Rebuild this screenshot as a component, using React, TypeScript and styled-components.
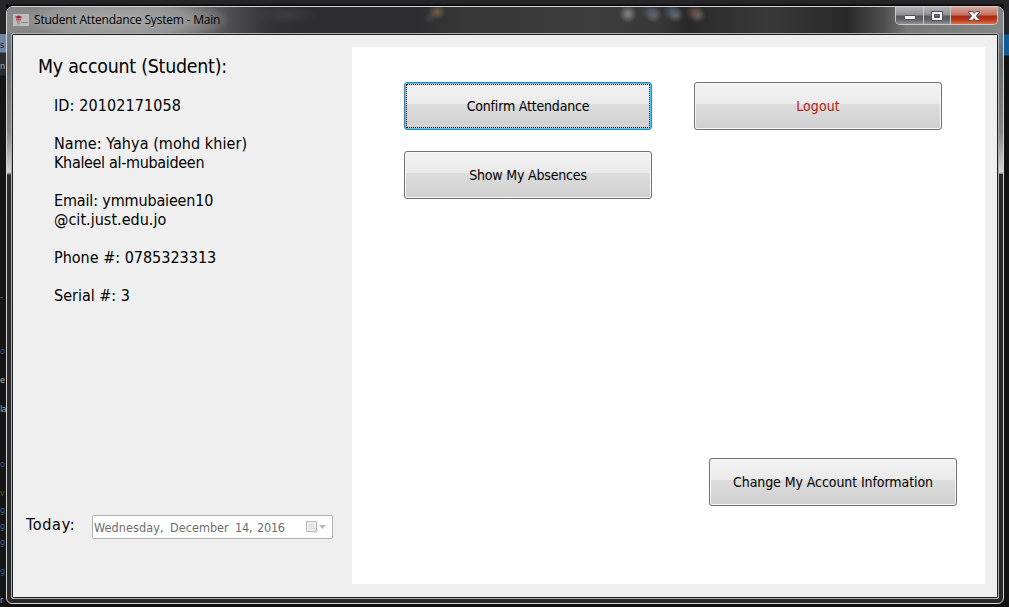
import React from "react";
import styled, { createGlobalStyle, css } from "styled-components";

const Global = createGlobalStyle`
  * { box-sizing: border-box; }
  body { margin: 0; background: #101011; overflow: hidden; }
`;

const tahoma = css`
  font-family: "DejaVu Sans Condensed", "DejaVu Sans", sans-serif;
  font-stretch: condensed;
`;

const Desktop = styled.div`
  display: grid;
  grid-template-columns: 6px 998px 5px;
  width: 1009px;
  height: 607px;
  overflow: hidden;
  background: linear-gradient(#262628 0, #242426 4px, #08080a 5px, #08080a 6px, #101011 7px);
`;

const Strip = styled.div`
  display: flex;
  flex-direction: column;
  align-items: flex-start;
  background: linear-gradient(#262628 0, #262628 34px, #6f86a6 34px, #6f86a6 52px, #2d2d30 53px, #2d2d30 75px, #151516 76px);
`;

const Fragment = styled.span<{ $gap: number; $color: string }>`
  ${tahoma}
  flex: none;
  height: 14px;
  margin-top: ${(p) => p.$gap}px;
  font-size: 9px;
  line-height: 14px;
  letter-spacing: -0.8px;
  color: ${(p) => p.$color};
`;

const RightStrip = styled.div`
  background: linear-gradient(#262628 0, #262628 34px, #0d5c95 35px, #0d5c95 55px, #121213 56px);
`;

const Frame = styled.div`
  display: flex;
  flex-direction: column;
  height: 598px;
  margin-top: 6px;
  border: 1px solid #d4d4d4;
  border-radius: 7px 7px 6px 6px;
  overflow: hidden;
  background:
    linear-gradient(90deg, transparent 990px, #282828 990px) 0 167px / 100% 100% no-repeat,
    linear-gradient(#77777a 0, #6c7f8c 30px, #66686a 55px, #777 85px, #858585 125px, #d4d4d4 165px, #777 167px, #2c2c2d 168px, #28292b 100%);
`;

const TitleBar = styled.header`
  display: flex;
  align-items: flex-start;
  height: 26px;
  padding-left: 6px;
  background:
    radial-gradient(ellipse 9px 8px at 430px 5px, #8b7650b0 0, transparent 100%),
    radial-gradient(ellipse 6px 6px at 423px 11px, #41525ca0 0, transparent 100%),
    radial-gradient(ellipse 9px 9px at 621px 7px, #8b8b8bd0 15%, transparent 100%),
    radial-gradient(ellipse 9px 9px at 643px 5px, #56677ca0 0, transparent 100%),
    radial-gradient(ellipse 8px 8px at 647px 8px, #858585a0 0, transparent 100%),
    radial-gradient(ellipse 9px 9px at 665px 5px, #566c8ca0 0, transparent 100%),
    radial-gradient(ellipse 8px 8px at 669px 8px, #858585a0 0, transparent 100%),
    radial-gradient(ellipse 9px 9px at 687px 5px, #80564ea0 0, transparent 100%),
    radial-gradient(ellipse 8px 8px at 691px 8px, #858585a0 0, transparent 100%),
    radial-gradient(ellipse 34px 9px at 280px 8px, #48484a90 0, transparent 100%),
    radial-gradient(ellipse 114px 24px at 110px 13px, #a4a4a4 20%, #9c9c9cd0 65%, #8c8c8c80 85%, transparent 100%),
    linear-gradient(90deg, #89898a 0, #747475 60px, #5e5e60 205px, #454547 235px, #323234 265px, #2d2d30 300px, #2d2d2f 410px, #383838 460px, #3c3c3c 590px, #383838 650px, #292929 680px, #383838 760px, #292929 840px, #4c4c4c 875px, #777 900px, #858687 100%);
`;

const AppIcon = styled.svg`
  width: 16px;
  height: 12px;
  margin-top: 7px;
`;

const Title = styled.h1`
  flex: 1;
  margin: 3px 0 0 5px;
  font: 400 12px/20px "Open Sans", "Noto Sans", sans-serif;
  letter-spacing: -0.2px;
  color: #000;
`;

const Captions = styled.div`
  display: flex;
  width: 103px;
  height: 18px;
  margin-right: 5px;
  border: 1px solid #c9c9c9;
  border-top: 0;
  border-radius: 0 0 5px 5px;
  overflow: hidden;
`;

const CaptionButton = styled.button<{ $close?: boolean; $drop?: number }>`
  display: flex;
  justify-content: center;
  align-items: center;
  width: ${(p) => (p.$close ? 47 : 27)}px;
  height: 17px;
  padding: ${(p) => p.$drop ?? 0}px 0 0;
  border: 0;
  & + & { border-left: 1px solid #c9c9c9; }
  background: ${(p) =>
    p.$close
      ? "linear-gradient(#d8a498 0, #c6705e 8px, #a82812 9px, #bc3a1d 13px, #e0714d 17px)"
      : "linear-gradient(#b2b3b5 0, #8e8f91 8px, #57585b 9px, #65666a 13px, #929396 17px)"};
`;

const Client = styled.main`
  display: flex;
  width: 988px;
  height: 566px;
  margin-left: 4px;
  border: 1px solid #aeb0b0;
  border-radius: 2px;
  background: #efefef;
  box-shadow: inset 0 0 0 1px #1c1e20;
  padding: 1px;
`;

const Sidebar = styled.aside`
  display: flex;
  flex-direction: column;
  width: 339px;
  padding: 20px 0 58px 13px;
  color: #000;
  ${tahoma}
`;

const Heading = styled.h2`
  margin: 0 0 0 12px;
  font-size: 19.4px;
  font-weight: 400;
  line-height: 24px;
  letter-spacing: -0.25px;
`;

const Details = styled.div`
  display: flex;
  flex-direction: column;
  gap: 19px;
  margin: 17px 0 0 28px;
`;

const Line = styled.div<{ $track?: number }>`
  font-size: 16px;
  line-height: 19px;
  white-space: nowrap;
  letter-spacing: ${(p) => p.$track ?? 0}px;
`;

const DateRow = styled.div`
  display: flex;
  align-items: flex-start;
  margin-top: auto;
`;

const Today = styled.label`
  width: 66px;
  font-size: 16px;
  line-height: 19px;
  letter-spacing: 0.7px;
`;

const DateField = styled.div`
  display: flex;
  align-items: center;
  width: 241px;
  height: 24px;
  padding: 0 5px 0 1px;
  border: 1px solid #afb0b0;
  border-radius: 2px;
  background: #fff;
  color: #6d6d6d;
  font-size: 12.5px;
`;

const DatePart = styled.span<{ $w: number; $track: number }>`
  width: ${(p) => p.$w}px;
  letter-spacing: ${(p) => p.$track}px;
  white-space: nowrap;
`;

const CalendarIcon = styled.svg`
  width: 22px;
  height: 14px;
  margin-left: auto;
`;

const Panel = styled.section`
  display: flex;
  flex-direction: column;
  width: 633px;
  height: 537px;
  margin-top: 12px;
  padding: 35px 28px 78px 52px;
  background: #fff;
`;

const Actions = styled.div`
  display: grid;
  grid-template-columns: 248px 248px;
  column-gap: 42px;
  row-gap: 21px;
`;

const ActionButton = styled.button<{ $focused?: boolean; $color?: string; $track?: number }>`
  display: block;
  width: 248px;
  height: 48px;
  padding: 0;
  border: 1px solid ${(p) => (p.$focused ? "#3c7fb1" : "#707070")};
  border-radius: 3px;
  background: linear-gradient(#f2f2f2 0, #ebebeb 21px, #dddddd 21px, #cfcfcf 100%);
  box-shadow: inset 0 0 0 1px ${(p) => (p.$focused ? "#46d0f8" : "#f8f8f8")};
  ${(p) => p.$focused && "outline: 1px dotted #000; outline-offset: -3px;"}
  color: ${(p) => p.$color || "#000"};
  ${tahoma}
  font-size: 14px;
  line-height: 18px;
  letter-spacing: ${(p) => p.$track ?? -0.18}px;
`;

const Footer = styled.div`
  display: flex;
  justify-content: flex-end;
  margin-top: auto;
`;

const fragments = [
  { text: "s", gap: 38, color: "#10151c" },
  { text: "n", gap: 7, color: "#aaa" },
  { text: "-", gap: 217, color: "#a56a26" },
  { text: "o", gap: 40, color: "#2d5a8c" },
  { text: "e", gap: 15, color: "#c0bda0" },
  { text: "la", gap: 15, color: "#94a895" },
  { text: "o", gap: 41, color: "#2d5a8c" },
  { text: "v", gap: 15, color: "#2f6b25" },
  { text: "g", gap: 3, color: "#2d5a8c" },
  { text: "g", gap: 2, color: "#2d5a8c" },
  { text: "g", gap: 2, color: "#2d5a8c" },
  { text: "g", gap: 15, color: "#2d5a8c" },
  { text: "r", gap: 15, color: "#a0a0a0" },
];

export default function App() {
  return (
    <>
      <Global />
      <Desktop>
        <Strip>
          {fragments.map((f, i) => (
            <Fragment key={i} $gap={f.gap} $color={f.color}>{f.text}</Fragment>
          ))}
        </Strip>
        <Frame>
          <TitleBar>
            <AppIcon viewBox="0 0 16 12">
              <rect width="16" height="12" fill="#bdbdbd" />
              <path d="M1.5 3 5.5 1.4 9.5 3 5.5 4.5Z" fill="#a3283c" />
              <path d="M3 4.5h5v2H3z" fill="#b34c5b" />
              <path d="M3.5 6.5h4l-1 3.8h-2z" fill="#999" />
              <path d="M8 8.5h7" stroke="#8c8c8c" />
            </AppIcon>
            <Title>Student Attendance System - Main</Title>
            <Captions>
              <CaptionButton $drop={4} aria-label="Minimize">
                <svg width="12" height="5" viewBox="0 0 12 5">
                  <rect x=".5" y=".5" width="11" height="4" rx=".5" fill="#f4f4f4" stroke="#4c5062" />
                </svg>
              </CaptionButton>
              <CaptionButton aria-label="Maximize">
                <svg width="12" height="10" viewBox="0 0 12 10">
                  <path d="M.5.5h11v9H.5zM3.5 3.5v3h5v-3z" fill="#f4f4f4" fillRule="evenodd" stroke="#4c5062" />
                </svg>
              </CaptionButton>
              <CaptionButton $close aria-label="Close">
                <svg width="12" height="10" viewBox="0 0 12 10">
                  <path d="M.5.5h3.7L6 2.4 7.8.5h3.7v1L8.3 5l3.2 3.5v1H7.8L6 7.6 4.2 9.5H.5v-1L3.7 5 .5 1.5z" fill="#f4f4f4" stroke="#4c5062" />
                </svg>
              </CaptionButton>
            </Captions>
          </TitleBar>
          <Client>
            <Sidebar>
              <Heading>My account (Student):</Heading>
              <Details>
                <Line $track={0.1}>ID: 20102171058</Line>
                <div>
                  <Line $track={0.07}>Name: Yahya (mohd khier)</Line>
                  <Line $track={-0.33}>Khaleel al-mubaideen</Line>
                </div>
                <div>
                  <Line $track={-0.15}>Email: ymmubaieen10</Line>
                  <Line $track={0.03}>@cit.just.edu.jo</Line>
                </div>
                <Line>Phone #: 0785323313</Line>
                <Line>Serial #: 3</Line>
              </Details>
              <DateRow>
                <Today>Today:</Today>
                <DateField>
                  <DatePart $w={76} $track={0.1}>Wednesday,</DatePart>
                  <DatePart $w={65} $track={0.05}>December</DatePart>
                  <DatePart $w={22} $track={-0.1}>14,</DatePart>
                  <DatePart $w={30} $track={-0.2}>2016</DatePart>
                  <CalendarIcon viewBox="0 0 22 14">
                    <path d="M1.5 1.5h10v8l-2 2h-8z" fill="#f2f2f5" stroke="#b9b6bb" />
                    <path d="M3 4.5h7M3 6.5h7M3 8.5h7M4.5 3v7M6.5 3v7M8.5 3v7" stroke="#d5d5dc" strokeWidth=".6" />
                    <path d="M9 12h3V9" fill="none" stroke="#bbb" />
                    <path d="M14 5h7l-3.5 4z" fill="#b9bcb0" />
                  </CalendarIcon>
                </DateField>
              </DateRow>
            </Sidebar>
            <Panel>
              <Actions>
                <ActionButton $focused>Confirm Attendance</ActionButton>
                <ActionButton $color="#b22222" $track={0.05}>Logout</ActionButton>
                <ActionButton>Show My Absences</ActionButton>
              </Actions>
              <Footer>
                <ActionButton $track={-0.08}>Change My Account Information</ActionButton>
              </Footer>
            </Panel>
          </Client>
        </Frame>
        <RightStrip />
      </Desktop>
    </>
  );
}
